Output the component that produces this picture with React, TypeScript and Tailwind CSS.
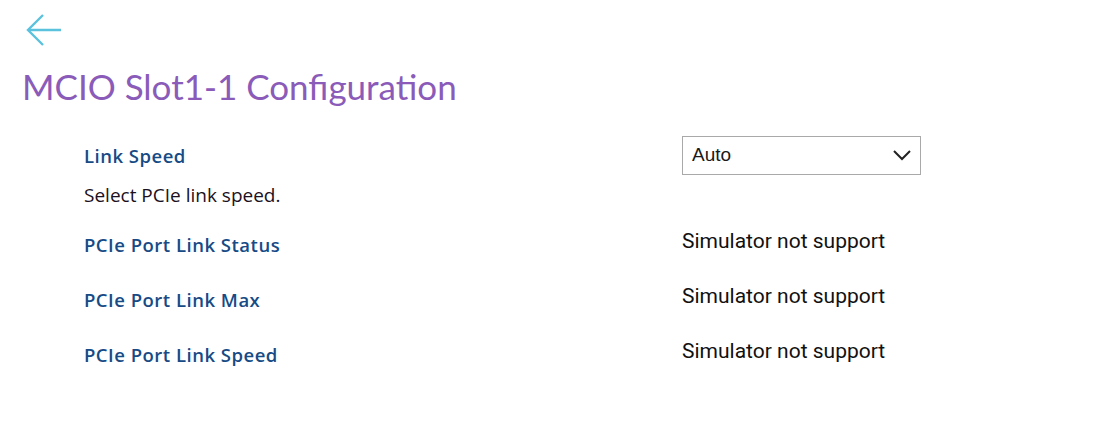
import { useState } from 'react';

const rows = [
  { label: 'PCIe Port Link Status', value: 'Simulator not support' },
  { label: 'PCIe Port Link Max', value: 'Simulator not support' },
  { label: 'PCIe Port Link Speed', value: 'Simulator not support' },
];

export default function App() {
  const [speed, setSpeed] = useState('Auto');

  return (
    <div className="min-h-screen bg-white pl-[22px] pt-[12px] font-['Open_Sans',sans-serif]">
      <button className="ml-[3px] block text-[#5bc2dd]" aria-label="Back">
        <svg width="38" height="36" viewBox="0 0 38 36" fill="none" stroke="currentColor" strokeWidth="2.4">
          <path d="M36 18H3" />
          <path d="M18 3L3 18l15 15" />
        </svg>
      </button>

      <h1 className="mt-[18px] text-[35px] leading-[40px] text-[#8a5bb9] font-['Lato',sans-serif]">
        MCIO Slot1-1 Configuration
      </h1>

      <div className="mt-[30px] ml-[62px]">
        <div className="flex items-center">
          <div className="w-[598px] text-[18.5px] font-semibold tracking-[0.5px] text-[#164b86]">Link Speed</div>
          <div className="relative w-[239px]">
            <select
              value={speed}
              onChange={(e) => setSpeed(e.target.value)}
              className="h-[39px] w-full appearance-none border border-[#a9a9a9] bg-white pl-[9px] text-[19px] text-[#1a1a1a] font-['Liberation_Sans',sans-serif] outline-none"
            >
              <option>Auto</option>
              <option>Gen1</option>
              <option>Gen2</option>
              <option>Gen3</option>
              <option>Gen4</option>
              <option>Gen5</option>
            </select>
            <svg
              className="pointer-events-none absolute right-[10px] top-[13px] text-[#222]"
              width="18"
              height="12"
              viewBox="0 0 18 12"
              fill="none"
              stroke="currentColor"
              strokeWidth="2"
            >
              <path d="M1 2l8 8 8-8" />
            </svg>
          </div>
        </div>

        <p className="mt-[7px] text-[19px] leading-[26px] text-[#1b1022]">Select PCIe link speed.</p>

        <div className="mt-[9px]">
          {rows.map((r) => (
            <div key={r.label} className="flex h-[55px] items-center">
              <div className="w-[598px] text-[18.5px] font-semibold tracking-[0.5px] text-[#164b86]">{r.label}</div>
              <div className="-mt-[6px] text-[21px] text-[#111] font-['Roboto',sans-serif]">{r.value}</div>
            </div>
          ))}
        </div>
      </div>
    </div>
  );
}
